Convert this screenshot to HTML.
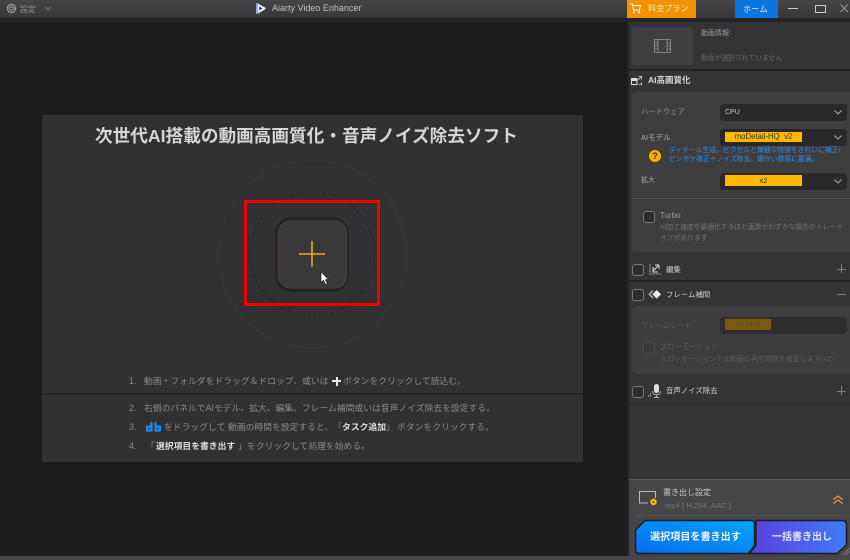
<!DOCTYPE html>
<html lang="ja"><head><meta charset="utf-8"><title>Aiarty Video Enhancer</title>
<style>
html,body{margin:0;padding:0;width:850px;height:560px;overflow:hidden;background:#1b1c1e}
body{position:relative;font-family:"Liberation Sans","Noto Sans CJK JP",sans-serif;color:#bbb;text-spacing-trim:space-all}
.a{position:absolute}
.t{position:absolute;white-space:nowrap;line-height:1}
.i{font-size:8.8px;color:#8a8a8a}
.b{font-size:8.8px;color:#ddd;font-weight:700}
.cb{position:absolute;width:9.500px;height:10px;border:1px solid #77787a;border-radius:3px;background:#2b2c2e}
.sel{position:absolute;left:720px;width:127px;height:17px;background:#29292b;border-radius:3px}
svg{position:absolute;overflow:visible}
</style></head><body>

<!-- title bar -->
<div class="a" style="left:0;top:0;width:850px;height:18px;background:linear-gradient(#454547,#38383a)"></div>
<div class="a" style="left:0;top:18px;width:850px;height:4px;background:#232426"></div>
<svg style="left:6px;top:3px" width="12" height="12" viewBox="0 0 12 12"><circle cx="5.500" cy="5.500" r="4" fill="none" stroke="#aaa" stroke-width="1.500" stroke-dasharray="2 .6"/><circle cx="5.500" cy="5.500" r="1.800" fill="none" stroke="#aaa"/></svg>
<div class="t" style="left:20px;top:6px;font-size:8px;color:#8d8d8d">設定</div>
<svg style="left:44px;top:6px" width="8" height="5" viewBox="0 0 8 5"><path d="M1 1l3 3 3-3" fill="none" stroke="#777"/></svg>
<svg style="left:255px;top:3px" width="11" height="11" viewBox="0 0 11 11"><path d="M1 1.200C1 .4 1.600 0 2.400.3L10 4.500c.8.500.8 1.500 0 2L2.400 10.700C1.600 11 1 10.600 1 9.800z" fill="#eef1ff"/><path d="M4.300 3.500L7.500 5.500 4.300 7.500z" fill="#3b3b3d"/><path d="M1 1.200C1 .4 1.600 0 2.400.3L3 .7V10.300l-.6.400C1.600 11 1 10.600 1 9.800z" fill="#8fa8f0"/></svg>
<div class="t" style="left:272px;top:3px;font-size:9px;line-height:11px;color:#c2c2c2">Aiarty Video Enhancer</div>

<div class="a" style="left:627px;top:0;width:69px;height:18px;background:#f39200"></div>
<svg style="left:630px;top:3px" width="11" height="11" viewBox="0 0 11 11"><path d="M.5 1H2.500L3.500 7H9.500L10.500 2.500H3" fill="none" stroke="#fff" stroke-width="1"/><circle cx="4" cy="9.300" r="1" fill="#fff"/><circle cx="9" cy="9.300" r="1" fill="#fff"/></svg>
<div class="t" style="left:648px;top:5px;font-size:8.100px;color:#ffe7c0">料金プラン</div>
<div class="a" style="left:735px;top:0;width:43px;height:18px;background:#0a74e0"></div>
<div class="t" style="left:743px;top:5px;font-size:8.300px;color:#d5e8ff">ホーム</div>
<div class="a" style="left:788px;top:8px;width:10px;height:1px;background:#ccc"></div>
<div class="a" style="left:815px;top:5px;width:9px;height:6px;border:1px solid #ccc"></div>
<svg style="left:840px;top:4px" width="9" height="9" viewBox="0 0 9 9"><path d="M.5.500L8 8M8 .5L.5 8" stroke="#999" fill="none"/></svg>

<!-- main card -->
<div class="a" style="left:42px;top:115px;width:541px;height:347px;background:#313133;border-radius:2px"></div>
<div class="a" style="left:42px;top:393px;width:541px;height:2px;background:#262628"></div>
<div class="t" style="left:95px;top:126px;font-size:17.650px;font-weight:700;line-height:20px;color:#d6d6d6">次世代AI搭載の動画高画質化・音声ノイズ除去ソフト</div>

<svg style="left:210px;top:185px" width="210" height="135" viewBox="0 0 210 135">
<circle cx="102.500" cy="69" r="94" fill="none" stroke="#373739" stroke-width="1"/>
<circle cx="102.500" cy="69" r="62" fill="none" stroke="#252527" stroke-dasharray="3 2.500"/>
<rect x="65" y="32" width="74" height="75" rx="17" fill="#242426"/>
<rect x="68.500" y="36" width="68" height="67" rx="12" fill="#39393b" stroke="#4a4234" stroke-width="1"/>
<path d="M102 56V82M89 69H115" stroke="#f0a818" stroke-width="1.600" fill="none"/>
<path d="M111 86.500V97.500L113.500 95.300L115.500 99.500L117.300 98.700L115.300 94.700H118.500Z" fill="#fff" stroke="#111" stroke-width=".6"/>
<rect x="35.500" y="16.500" width="133" height="103" fill="none" stroke="#f10000" stroke-width="3"/>
</svg>

<div class="t i" style="left:129px;top:376.500px">1.</div>
<div class="t i" style="left:144px;top:376.500px">動画・フォルダをドラッグ＆ドロップ、或いは</div>
<div class="a" style="left:332px;top:380px;width:9px;height:2px;background:#e8e8e8"></div>
<div class="a" style="left:335.500px;top:376.500px;width:2px;height:9px;background:#e8e8e8"></div>
<div class="t i" style="left:343px;top:376.500px">ボタンをクリックして読込む。</div>

<div class="t i" style="left:129px;top:404px">2.</div>
<div class="t i" style="left:144px;top:404px">右側のパネルでAIモデル、拡大、編集、フレーム補間或いは音声ノイズ除去を設定する。</div>

<div class="t i" style="left:129px;top:423px">3.</div>
<svg style="left:146px;top:422px" width="15" height="10" viewBox="0 0 15 10"><path d="M0 3.500H4.500V0H6.500V9.500H0ZM8.500 0H10.500V3.500H15V9.500H8.500Z" fill="#1b8ef2"/><path d="M2 5.500H4.500V8H2ZM10.500 5.500H13V8H10.500Z" fill="#0d5fb0"/></svg>
<div class="t i" style="left:164px;top:423px">をドラッグして</div>
<div class="t i" style="left:228px;top:423px">動画の時間を設定すると、「<span class="b">タスク追加</span>」</div>
<div class="t i" style="left:397px;top:423px">ボタンをクリックする。</div>

<div class="t i" style="left:129px;top:442px">4.</div>
<div class="t i" style="left:146px;top:442px">「</div>
<div class="t b" style="left:156px;top:442px">選択項目を書き出す</div>
<div class="t i" style="left:238px;top:442px">」</div>
<div class="t i" style="left:247px;top:442px">をクリックして処理を始める。</div>

<!-- bottom strip -->
<div class="a" style="left:0;top:556px;width:850px;height:4px;background:#47474a"></div>

<!-- right panel -->
<div class="a" style="left:627px;top:18px;width:223px;height:538px;background:#343436"></div>
<div class="a" style="left:627px;top:18px;width:2px;height:538px;background:#232426"></div>
<div class="a" style="left:627px;top:18px;width:223px;height:4px;background:#232426"></div>

<!-- info -->
<div class="a" style="left:632px;top:27px;width:61px;height:38px;background:#3f3f41;border-radius:3px"></div>
<svg style="left:654px;top:39px" width="17" height="14" viewBox="0 0 17 14"><path d="M.5.500H16.500V13.500H.5ZM4 .5V13.500M13 .5V13.500M.5 4H4M.5 7H4M.5 10H4M13 4H16.500M13 7H16.500M13 10H16.500" fill="none" stroke="#858587"/></svg>
<div class="t" style="left:701px;top:30px;font-size:7px;color:#9a9a9a">動画情報:</div>
<div class="t" style="left:701px;top:56px;font-size:6.800px;color:#666">動画が選択されていません</div>
<div class="a" style="left:629px;top:69px;width:221px;height:2px;background:#222325"></div>

<!-- AI section -->
<svg style="left:631px;top:76px" width="11" height="9" viewBox="0 0 11 9"><path d="M.5 2.500H6V8.500H.5Z" fill="none" stroke="#ddd"/><path d="M.5 2.500H6V5H.5Z" fill="#ddd"/><path d="M7.500.5H10.500V3.500M7 4L10.500.5M10.500 6V8.500H8" fill="none" stroke="#bbb"/></svg>
<div class="t" style="left:648px;top:76px;font-size:8.500px;font-weight:700;color:#d8d8d8">AI高画質化</div>
<div class="a" style="left:632px;top:92px;width:218px;height:160px;background:#3e3e40;border-radius:4px 0 0 4px"></div>
<div class="t" style="left:641px;top:108px;font-size:7.300px;color:#8e8e8e">ハードウェア</div>
<div class="sel" style="top:104px"></div>
<div class="t" style="left:725px;top:109px;font-size:7px;color:#ccc">CPU</div>
<svg style="left:834px;top:110px" width="8" height="5" viewBox="0 0 8 5"><path d="M.5.500L4 4 7.500.5" fill="none" stroke="#aaa"/></svg>

<div class="t" style="left:641px;top:134px;font-size:7.500px;color:#aaa">AIモデル</div>
<div class="sel" style="top:129px"></div>
<div class="a" style="left:725px;top:132px;width:77px;height:10px;background:#ffb900"></div>
<div class="t" style="left:725px;top:133px;width:77px;text-align:center;font-size:7.800px;color:#333">moDetail-HQ&nbsp; v2</div>
<svg style="left:834px;top:135px" width="8" height="5" viewBox="0 0 8 5"><path d="M.5.500L4 4 7.500.5" fill="none" stroke="#aaa"/></svg>
<div class="a" style="left:649px;top:150px;width:12px;height:12px;border-radius:50%;background:#ffb000"></div>
<div class="t" style="left:649px;top:150px;width:12px;text-align:center;font-size:9px;line-height:12px;font-weight:700;color:#3a2d00">?</div>
<div class="t" style="left:669px;top:148px;font-size:6.800px;color:#2c8be4">ディテール生成。ピクセルと微細な特徴をきれいに補正!</div>
<div class="t" style="left:669px;top:156.500px;font-size:6.800px;color:#2c8be4">ピンボケ補正＋ノイズ除去。細かい質感に最適。</div>

<div class="t" style="left:641px;top:177px;font-size:7px;color:#aaa">拡大</div>
<div class="sel" style="top:173px"></div>
<div class="a" style="left:725px;top:175px;width:77px;height:11px;background:#ffb900"></div>
<div class="t" style="left:725px;top:177px;width:77px;text-align:center;font-size:7.500px;color:#333">x2</div>
<svg style="left:834px;top:179px" width="8" height="5" viewBox="0 0 8 5"><path d="M.5.500L4 4 7.500.5" fill="none" stroke="#aaa"/></svg>
<div class="a" style="left:632px;top:198px;width:218px;height:1px;background:#4a4a4c"></div>
<div class="cb" style="left:643px;top:211px"></div>
<div class="t" style="left:660px;top:212px;font-size:8px;color:#9a9a9a">Turbo</div>
<div class="t" style="left:660px;top:225px;font-size:6.800px;color:#727272">AI加工速度を最適化するほど画質がわずかな損失のトレード</div>
<div class="t" style="left:660px;top:236px;font-size:6.800px;color:#727272">オフがあります</div>

<!-- edit -->
<div class="cb" style="left:632px;top:264px"></div>
<svg style="left:648px;top:264px" width="13" height="12" viewBox="0 0 13 12"><path d="M2 0V10H13" fill="none" stroke="#aaa" stroke-dasharray="1.500 .7"/><path d="M11 1L5.500 6.500M11 1V5M11 1H7M5 3V8H10" fill="none" stroke="#e0e0e0"/></svg>
<div class="t" style="left:666px;top:266px;font-size:7.400px;color:#d0d0d0">編集</div>
<div class="a" style="left:837px;top:268.500px;width:9px;height:1px;background:#808082"></div>
<div class="a" style="left:841px;top:264px;width:1px;height:9px;background:#808082"></div>
<div class="a" style="left:629px;top:280px;width:221px;height:2px;background:#252527"></div>

<!-- frame -->
<div class="cb" style="left:632px;top:289px"></div>
<svg style="left:648px;top:289px" width="14" height="11" viewBox="0 0 14 11"><path d="M8.700 1L13 5.300 8.700 9.600 4.400 5.300Z" fill="#eee"/><path d="M4.500 1L.3 5.300 4.500 9.600 5.500 8.500 2.500 5.300 5.500 2Z" fill="#aaa"/></svg>
<div class="t" style="left:666px;top:291px;font-size:7.400px;color:#d0d0d0">フレーム補間</div>
<div class="a" style="left:837px;top:294px;width:9px;height:1px;background:#808082"></div>
<div class="a" style="left:632px;top:306px;width:218px;height:68px;background:#3d3d3f;border-radius:4px 0 0 4px"></div>
<div class="t" style="left:641px;top:322px;font-size:7.300px;color:#5d5d5f">フレームレート</div>
<div class="sel" style="top:317px;background:#2e2e30"></div>
<div class="a" style="left:725px;top:319px;width:46px;height:11px;background:#7a5a10"></div>
<div class="t" style="left:725px;top:321px;width:46px;text-align:center;font-size:7.500px;color:#5e4a1a">25 FPS</div>
<div class="cb" style="left:643px;top:342px;border-color:#4a4a4c;background:#39393b"></div>
<div class="t" style="left:660px;top:343px;font-size:7.300px;color:#5d5d5f">スローモーション</div>
<div class="t" style="left:660px;top:356px;font-size:7px;color:#5d5d5f">スローモーションでは動画の再生時間を変更します(x2)</div>

<!-- audio -->
<div class="cb" style="left:632px;top:386px"></div>
<svg style="left:648px;top:384px" width="14" height="14" viewBox="0 0 14 14"><rect x="6" y="0" width="5" height="9" rx="2.500" fill="#ddd"/><path d="M4.500 7c0 5 8 5 8 0M8.500 11V14M6 13.500H11" fill="none" stroke="#aaa"/><path d="M.5 11V13M2.500 9V13" stroke="#888"/></svg>
<div class="t" style="left:666px;top:387px;font-size:7.400px;color:#d0d0d0">音声ノイズ除去</div>
<div class="a" style="left:837px;top:390.500px;width:9px;height:1px;background:#808082"></div>
<div class="a" style="left:841px;top:386px;width:1px;height:9px;background:#808082"></div>
<div class="a" style="left:629px;top:403px;width:221px;height:1px;background:#29292b"></div>

<!-- export -->
<div class="a" style="left:629px;top:479px;width:221px;height:77px;background:#464648;border-top:1px solid #59595b;box-sizing:border-box"></div>
<svg style="left:639px;top:491px" width="20" height="17" viewBox="0 0 20 17"><path d="M9 12H.5V.5H16.500V7" fill="none" stroke="#bbb"/><circle cx="14.500" cy="11" r="3.200" fill="#ffb900"/><circle cx="14.500" cy="11" r="1" fill="#464648"/></svg>
<div class="t" style="left:663px;top:489px;font-size:8px;color:#c8c8c8">書き出し設定</div>
<div class="t" style="left:665px;top:502px;font-size:7.700px;color:#777">mp4 [ H.264, AAC ]</div>
<svg style="left:833px;top:495px" width="11" height="10" viewBox="0 0 11 10"><path d="M.5 4.500L5 1 9.500 4.500M.5 8.500L5 5 9.500 8.500" fill="none" stroke="#e5a91c" stroke-width="1.200"/></svg>
<div class="a" style="left:634px;top:515px;width:216px;height:1px;background:#525254"></div>

<svg style="left:634px;top:519px" width="216" height="37" viewBox="0 0 216 37">
<defs>
<linearGradient id="g1" x1="0" y1="1" x2="1" y2="0"><stop offset="0" stop-color="#0a6cf0"/><stop offset="1" stop-color="#02a4fb"/></linearGradient>
<linearGradient id="g2" x1="0" y1="0" x2="1" y2="0"><stop offset="0" stop-color="#5a3fe0"/><stop offset="1" stop-color="#3f7cf6"/></linearGradient>
</defs>
<path d="M11 1.500H117C119.500 1.500 120.500 2.500 120.500 5V26L114.500 34.500H5C3 34.500 1.500 33.500 1.500 31V11Z" fill="url(#g1)" stroke="#1d1e20" stroke-width="1.500"/>
<path d="M122 1.500H208C211 1.500 212.500 3 212.500 6V26L203 34.500H115.500L122 26Z" fill="url(#g2)" stroke="#1d1e20" stroke-width="1.500"/>
<path d="M216 29L209 36M216 32L212 36" stroke="#77777a"/>
</svg>
<div class="t" style="left:650px;top:533px;font-size:10.100px;font-weight:700;color:#f2f6ff">選択項目を書き出す</div>
<div class="t" style="left:772px;top:533px;font-size:10px;font-weight:700;color:#e6e6ff">一括書き出し</div>
</body></html>
